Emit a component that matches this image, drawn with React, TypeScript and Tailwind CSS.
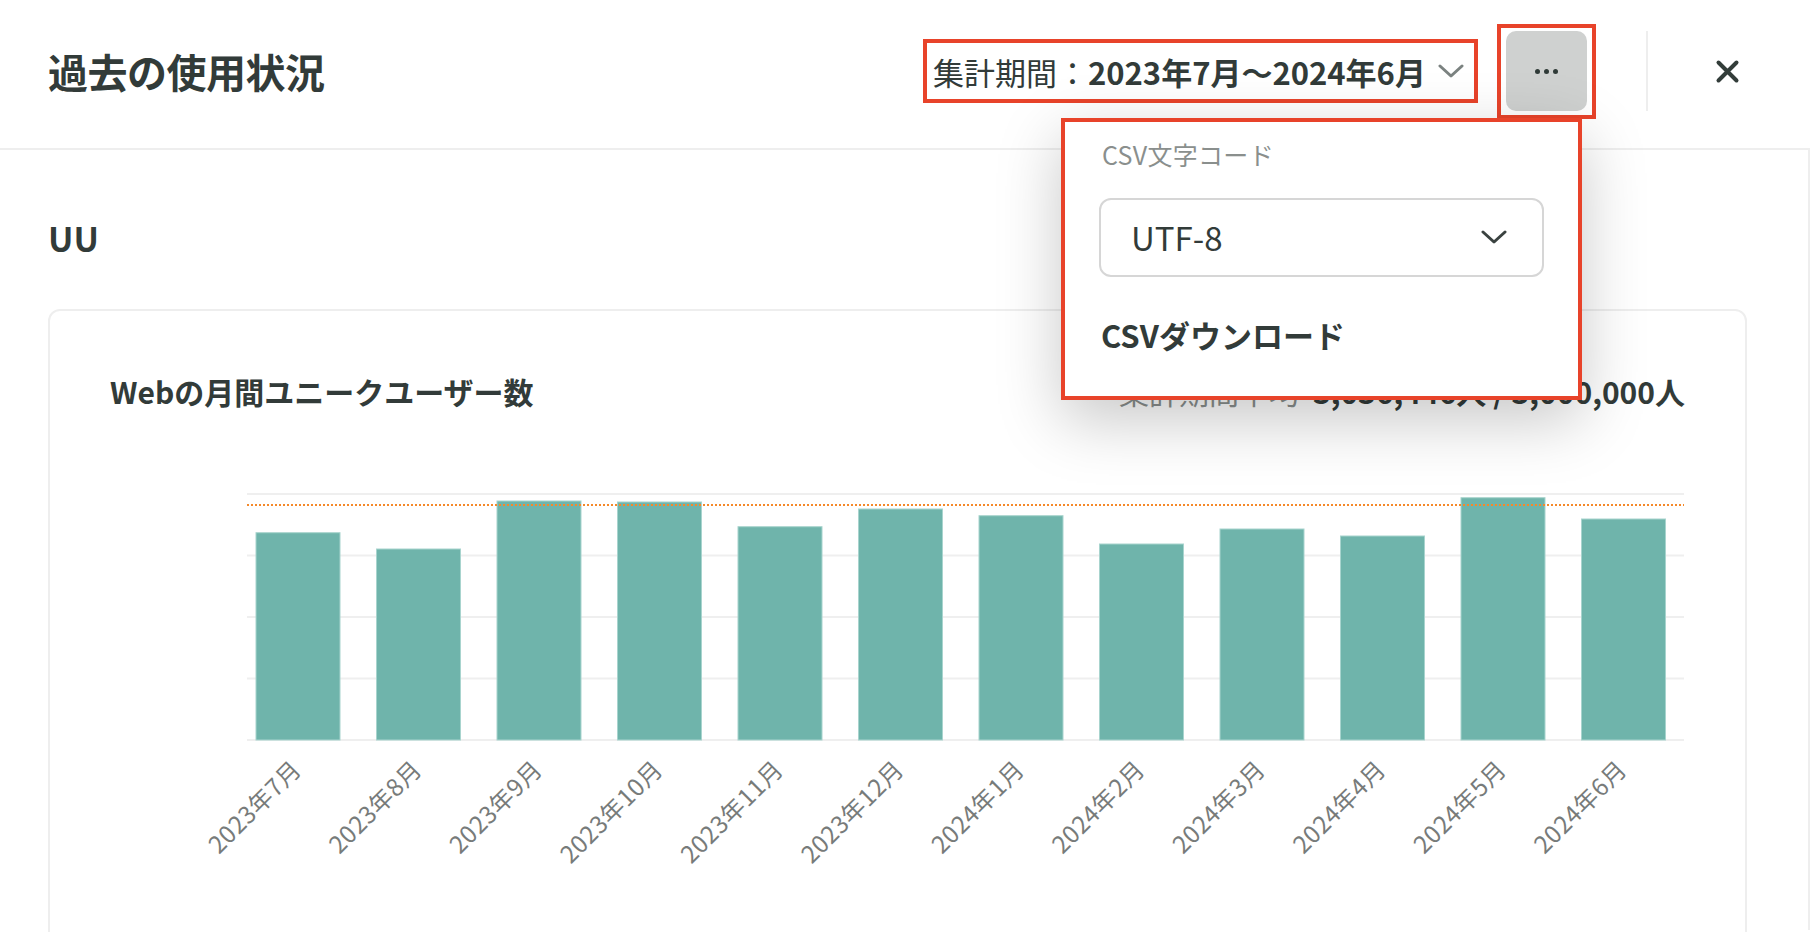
import React from 'react';

const months = [
  '2023年7月', '2023年8月', '2023年9月', '2023年10月', '2023年11月', '2023年12月',
  '2024年1月', '2024年2月', '2024年3月', '2024年4月', '2024年5月', '2024年6月',
];

// bar tops in page pixels, bottom of the plot is 740
const tops = [532.7, 549, 501, 502, 526.7, 509, 515.7, 544, 529, 536, 497.7, 519];

const SVG_TOP = 460;
const SVG_LEFT = 111;

function UsageChart() {
  const bottom = 740 - SVG_TOP;
  const grid = [494, 555.5, 617, 678.5, 740].map((y) => y - SVG_TOP);
  return (
    <svg width={1574} height={480} className="block" fontFamily="'Noto Sans CJK JP', sans-serif">
      {grid.map((y) => (
        <line key={y} x1={137} x2={1574} y1={y} y2={y} stroke="#efefef" strokeWidth={2} />
      ))}
      {tops.map((t, i) => {
        const x = 257 + 120.5 * i - SVG_LEFT;
        return (
          <rect
            key={i}
            x={x}
            y={t - SVG_TOP}
            width={84}
            height={bottom - (t - SVG_TOP)}
            fill="#6fb4ab"
            stroke="#a8d4ce"
            strokeWidth={1}
          />
        );
      })}
      <line
        x1={137}
        x2={1574}
        y1={505 - SVG_TOP}
        y2={505 - SVG_TOP}
        stroke="#f5892a"
        strokeWidth={2}
        strokeDasharray="2 2"
      />
      {months.map((m, i) => {
        const cx = 257 + 120.5 * i + 42 - SVG_LEFT + 5;
        const y = 771 - SVG_TOP;
        return (
          <text
            key={m}
            x={cx}
            y={y}
            fontSize={24}
            letterSpacing={0.6}
            fill="#777b7a"
            textAnchor="end"
            transform={`rotate(-45 ${cx} ${y})`}
          >
            {m}
          </text>
        );
      })}
    </svg>
  );
}

function Chevron({ className, color }: { className?: string; color: string }) {
  return (
    <svg className={className} viewBox="0 0 26 14" fill="none">
      <path d="M2 2 L13 12 L24 2" stroke={color} strokeWidth={3} strokeLinecap="round" strokeLinejoin="round" />
    </svg>
  );
}

export default function App() {
  return (
    <div className="w-[1810px] h-[932px] overflow-hidden bg-white text-[#323b39] font-['Noto_Sans_CJK_JP',sans-serif]">
      {/* Header */}
      <header className="relative z-20 h-[150px] pb-[6px] pl-[48px] pr-[70px] flex items-center border-b-2 border-[#eeeeee]">
        <h1 className="text-[40px] font-bold leading-none tracking-[-0.5px]">過去の使用状況</h1>
        <div className="ml-auto flex items-center">
          <div className="h-[64px] w-[555px] border-4 border-[#e8432a] flex items-center pl-[6px] pr-[10px]">
            <span className="text-[31px] leading-none">集計期間：</span>
            <span className="text-[31px] font-bold leading-none">2023年7月〜2024年6月</span>
            <Chevron className="ml-auto w-[26px] h-[14px]" color="#7b8280" />
          </div>

          <div className="relative ml-[19px]">
            <div className="w-[99px] h-[95px] border-4 border-[#e8432a] flex items-center justify-center">
              <button className="w-[81px] h-[80px] rounded-[10px] bg-[#cfd1d0] flex items-center justify-center gap-[4px]">
                <span className="w-[5px] h-[5px] rounded-full bg-[#2f3a37]" />
                <span className="w-[5px] h-[5px] rounded-full bg-[#2f3a37]" />
                <span className="w-[5px] h-[5px] rounded-full bg-[#2f3a37]" />
              </button>
            </div>

            {/* Dropdown menu */}
            <div className="absolute top-[94px] right-[14px] w-[521px] h-[282px] bg-white border-4 border-[#e8432a] shadow-[0_20px_60px_rgba(0,0,0,0.22)] px-[34px] pt-[14px]">
              <div className="text-[25px] leading-[36px] text-[#8a8f8d] pl-[3px] tracking-[0.3px]">CSV文字コード</div>
              <div className="mt-[26px] h-[79px] border-2 border-[#d6d6d6] rounded-[12px] flex items-center pl-[30px] pr-[35px]">
                <span className="text-[33px] leading-none text-[#323b39]">UTF-8</span>
                <Chevron className="ml-auto w-[26px] h-[14px]" color="#3a4240" />
              </div>
              <div className="mt-[35px] pl-[2px] text-[31px] leading-[45px] font-bold">CSVダウンロード</div>
            </div>
          </div>

          <div className="ml-[50px] w-[2px] h-[80px] bg-[#eeeeee]" />

          <button className="ml-[67px] w-[25px] h-[25px]">
            <svg viewBox="0 0 25 25" className="w-[25px] h-[25px]">
              <path d="M3.5 3.5 L21.5 21.5 M21.5 3.5 L3.5 21.5" stroke="#333d3a" strokeWidth={4} strokeLinecap="round" />
            </svg>
          </button>
        </div>
      </header>

      {/* Body */}
      <main className="pl-[48px] pr-[61px] h-[780px] border-r-2 border-[#eeeeee]">
        <h2 className="pt-[62px] text-[34px] leading-[51px] font-bold">UU</h2>

        <section className="mt-[46px] border-2 border-[#eeeeee] rounded-[12px] px-[60px] pt-[58px] h-[700px]">
          <div className="flex items-center justify-between">
            <h3 className="text-[30px] leading-[45px] font-bold">Webの月間ユニークユーザー数</h3>
            <div className="text-[30px] leading-[45px]">
              <span className="text-[#8a8f8d]">集計期間平均</span>
              <span className="ml-[14px] font-bold">3,036,446人 / 3,000,000人</span>
            </div>
          </div>
          <div className="mt-[46px]">
            <UsageChart />
          </div>
        </section>
      </main>
    </div>
  );
}
